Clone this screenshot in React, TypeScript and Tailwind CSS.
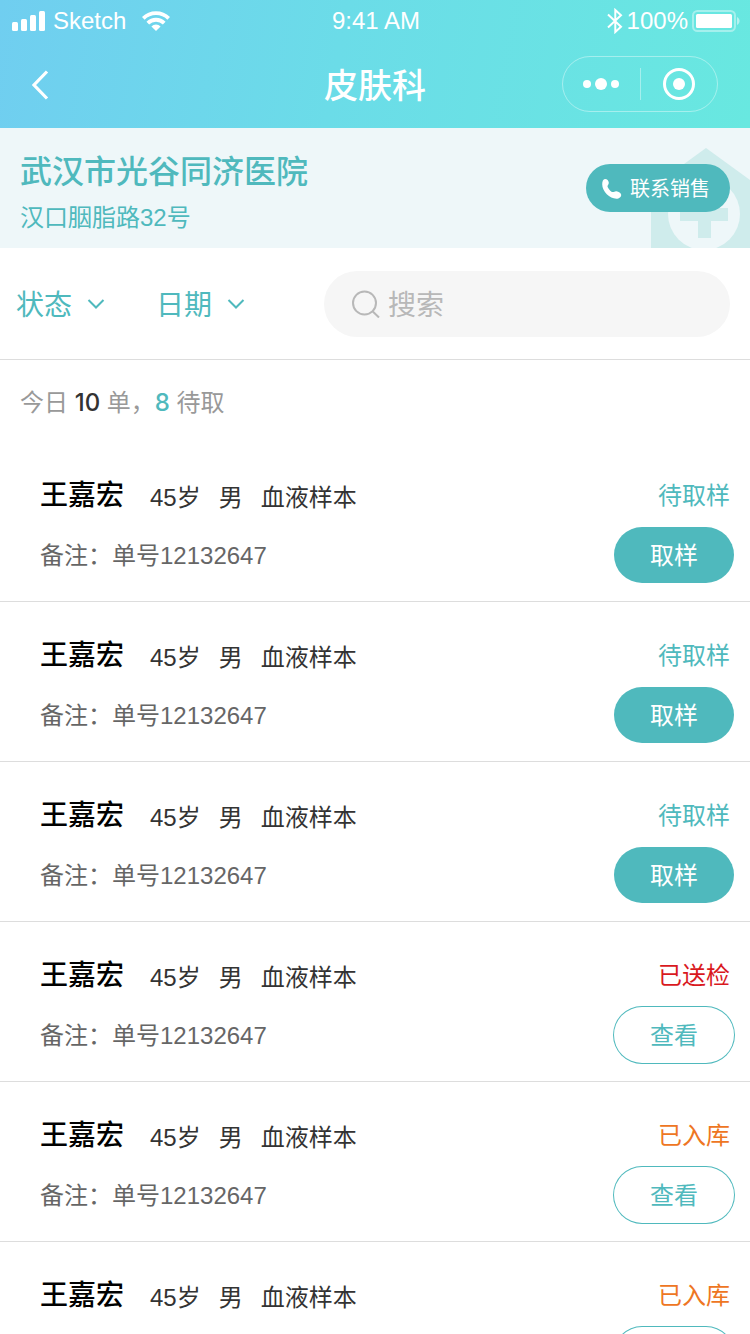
import { useState } from "react";
import clsx from "clsx";

type Status = "pending" | "sent" | "stored";

interface Order {
  id: number;
  name: string;
  age: number;
  gender: string;
  sample: string;
  orderNo: string;
  status: Status;
}

const person = {
  name: "王嘉宏",
  age: 45,
  gender: "男",
  sample: "血液样本",
  orderNo: "12132647",
};

const orders: Order[] = [
  { id: 1, ...person, status: "pending" },
  { id: 2, ...person, status: "pending" },
  { id: 3, ...person, status: "pending" },
  { id: 4, ...person, status: "sent" },
  { id: 5, ...person, status: "stored" },
  { id: 6, ...person, status: "stored" },
];

const statusLabels: Record<Status, string> = {
  pending: "待取样",
  sent: "已送检",
  stored: "已入库",
};

const statusColors: Record<Status, string> = {
  pending: "text-[#4fb9bd]",
  sent: "text-[#d9191e]",
  stored: "text-[#ee7623]",
};

function StatusBar() {
  return (
    <div className="grid h-10 grid-cols-3 items-center pt-0.5 pl-3 pr-2.5 font-['Liberation_Sans',sans-serif] text-2xl">
      <div className="flex items-center">
        <svg className="h-5 w-[33px]" viewBox="0 0 33 20" fill="currentColor" aria-hidden="true">
          <rect x="0" y="11" width="6" height="9" rx="1.5" />
          <rect x="9" y="8" width="6" height="12" rx="1.5" />
          <rect x="18" y="4" width="6" height="16" rx="1.5" />
          <rect x="27" y="0" width="6" height="20" rx="1.5" />
        </svg>
        <span className="ml-2">Sketch</span>
        <svg className="ml-4 h-5 w-7" viewBox="0 0 28 20" fill="none" stroke="currentColor" strokeWidth="3.8" aria-hidden="true">
          <path d="M1.3 7.3a18.2 18.2 0 0 1 25.4 0" />
          <path d="M5.8 12.2a11.5 11.5 0 0 1 16.4 0" />
          <path d="M14 20l-4.6-4.6a6.5 6.5 0 0 1 9.2 0z" fill="currentColor" stroke="none" />
        </svg>
      </div>
      <time className="text-center">9:41 AM</time>
      <div className="flex items-center justify-end">
        <svg className="mr-1 h-[26px] w-4" viewBox="0 0 16 26" fill="none" stroke="currentColor" strokeWidth="2" aria-hidden="true">
          <path d="M1 6.5l13 12.3L8.3 24V2L14 7.2 1 19.5" />
        </svg>
        <span>100%</span>
        <svg className="ml-1 h-[22px] w-12" viewBox="0 0 48 22" fill="currentColor" aria-hidden="true">
          <rect x="1" y="1" width="42" height="20" rx="4.5" fill="none" stroke="currentColor" strokeWidth="2" opacity=".4" />
          <rect x="4" y="4" width="36" height="14" rx="1.5" />
          <path d="M45 7c3.4 1.4 3.4 6.6 0 8z" opacity=".5" />
        </svg>
      </div>
    </div>
  );
}

function NavBar() {
  return (
    <nav className="grid h-[88px] grid-cols-3 items-center px-8">
      <button type="button" aria-label="返回" className="flex h-12 w-12 items-center">
        <svg className="h-8 w-6" viewBox="0 0 24 32" fill="none" stroke="currentColor" strokeWidth="3.2" aria-hidden="true">
          <path d="M15 3.500L2 17l13 13.500" />
        </svg>
      </button>
      <h1 className="pt-1 text-center text-[34px] font-medium">皮肤科</h1>
      <div className="flex h-14 w-[156px] items-center justify-self-end rounded-full border border-white/40">
        <button type="button" aria-label="更多" className="flex flex-1 justify-center">
          <svg className="h-3 w-9" viewBox="0 0 36 12" fill="currentColor" aria-hidden="true">
            <circle cx="4" cy="6" r="4" />
            <circle cx="18" cy="6" r="6" />
            <circle cx="32" cy="6" r="4" />
          </svg>
        </button>
        <span className="h-8 w-px bg-white/40" />
        <button type="button" aria-label="关闭" className="flex flex-1 justify-center">
          <svg className="h-8 w-8" viewBox="0 0 32 32" fill="none" aria-hidden="true">
            <circle cx="16" cy="16" r="14.5" stroke="currentColor" strokeWidth="3" />
            <circle cx="16" cy="16" r="6" fill="currentColor" />
          </svg>
        </button>
      </div>
    </nav>
  );
}

function HospitalCard() {
  return (
    <section className="relative flex h-[120px] items-center justify-between bg-[#eef7f9] px-5 text-[#4fb9bd]">
      {/* Hospital watermark behind the contact button */}
      <svg className="absolute bottom-0 right-0 h-[100px] w-[100px]" viewBox="0 0 100 100" aria-hidden="true">
        <path d="M1 100V40L56 0l44 32v68z" fill="#cfecec" />
        <circle cx="54" cy="66" r="36" fill="#eef7f9" />
        <path d="M48 43h13v17h17v13H61v17H48V73H30V60h18z" fill="#cfecec" />
      </svg>
      <div className="pt-2.5">
        <h2 className="text-[32px] leading-10 font-medium">武汉市光谷同济医院</h2>
        <p className="mt-2.5 text-2xl">汉口胭脂路32号</p>
      </div>
      <button
        type="button"
        className="relative flex h-12 w-36 items-center justify-center gap-2 rounded-full bg-[#4fb9bd] pt-0.5 pr-1 text-xl text-white"
      >
        <svg className="h-5 w-5" viewBox="0 0 20 20" fill="currentColor" aria-hidden="true">
          <path d="M3 0C5.200 0 6.600 1.400 6.800 3.700c.1 1.700-1.300 2.300-1.300 3.500 0 1.700 3.500 5.700 5.300 5.900 1.300.1 2-1.200 3.700-.9 2.200.4 4.500 1.700 4.700 3.500.2 2.200-2.100 4-4.800 4C7.800 19.700.2 12.500.2 5.300.2 2.300 1.200 0 3 0z" />
        </svg>
        联系销售
      </button>
    </section>
  );
}

function FilterSelect({ label, options }: { label: string; options: string[] }) {
  return (
    <div className="relative">
      <select
        aria-label={label}
        defaultValue={label}
        className="block w-[90px] appearance-none bg-transparent pt-1 text-[28px] leading-10 text-[#4fb9bd] outline-none"
      >
        <option value={label}>{label}</option>
        {options.map((option) => (
          <option key={option}>{option}</option>
        ))}
      </select>
      <svg
        className="pointer-events-none absolute top-4 right-0 h-3 w-5"
        viewBox="0 0 20 12"
        fill="none"
        stroke="#4fb9bd"
        strokeWidth="2"
        aria-hidden="true"
      >
        <path d="M2.5 2l7.5 7.5L17.5 2" />
      </svg>
    </div>
  );
}

function OrderRow({ order }: { order: Order }) {
  const pending = order.status === "pending";

  return (
    <li className="flex h-40 justify-between border-b border-[#dddddd] pt-8 pr-4 pl-10">
      <div>
        <div className="flex items-center leading-10">
          <h3 className="mr-[26px] text-[28px] font-medium text-black">{order.name}</h3>
          <p className="flex gap-[18px] pt-1 text-2xl leading-10 text-[#333333]">
            <span>{order.age}岁</span>
            <span>{order.gender}</span>
            <span>{order.sample}</span>
          </p>
        </div>
        <p className="mt-[18px] text-2xl leading-10 text-[#666666]">备注：单号{order.orderNo}</p>
      </div>
      <div className="flex flex-col items-end">
        <span className={clsx("mt-1.5 mr-1 text-2xl", statusColors[order.status])}>
          {statusLabels[order.status]}
        </span>
        <button
          type="button"
          className={clsx(
            "mt-[15px] h-14 w-[120px] rounded-full pt-0.5 text-2xl",
            pending ? "bg-[#4fb9bd] text-white" : "text-[#4fb9bd] ring-1 ring-[#4fb9bd]"
          )}
        >
          {pending ? "取样" : "查看"}
        </button>
      </div>
    </li>
  );
}

export default function App() {
  const [keyword, setKeyword] = useState("");

  const visibleOrders = orders.filter(
    (order) => order.name.includes(keyword) || order.orderNo.includes(keyword)
  );

  return (
    <div className="min-h-screen bg-white font-['Liberation_Sans','Noto_Sans_CJK_SC',sans-serif]">
      <header className="bg-linear-100 from-[#70cef0] via-[#6bdce8] via-45% to-[#68e8e0] text-white">
        <StatusBar />
        <NavBar />
      </header>

      <HospitalCard />

      <div className="flex h-28 items-center border-b border-[#dddddd] pr-5 pl-4">
        <div className="flex gap-[50px]">
          <FilterSelect label="状态" options={["待取样", "已送检", "已入库"]} />
          <FilterSelect label="日期" options={["今日", "本周", "本月"]} />
        </div>
        <label className="ml-[78px] flex h-[66px] min-w-0 flex-1 items-center gap-2 rounded-full bg-[#f6f6f6] px-7">
          <svg className="h-7 w-7 shrink-0" viewBox="0 0 28 28" fill="none" stroke="#b8b8b8" strokeWidth="2" aria-hidden="true">
            <circle cx="12.5" cy="13" r="11.5" />
            <path d="M20.5 21.2l6.5 6.3" />
          </svg>
          <input
            type="text"
            aria-label="搜索"
            placeholder="搜索"
            value={keyword}
            onChange={(e) => setKeyword(e.target.value)}
            className="min-w-0 flex-1 bg-transparent pt-1 text-[28px] leading-10 text-[#333333] outline-none placeholder:text-[#b8b8b8]"
          />
        </label>
      </div>

      <p className="flex h-[82px] items-center px-5 pt-1 text-2xl text-[#999999]">
        <span>
          今日 <b className="font-['Inter',sans-serif] font-medium text-[#333333]">10</b> 单，
          <b className="font-['Inter',sans-serif] font-medium text-[#4fb9bd]">8</b> 待取
        </span>
      </p>

      <ul>
        {visibleOrders.map((order) => (
          <OrderRow key={order.id} order={order} />
        ))}
      </ul>
    </div>
  );
}
